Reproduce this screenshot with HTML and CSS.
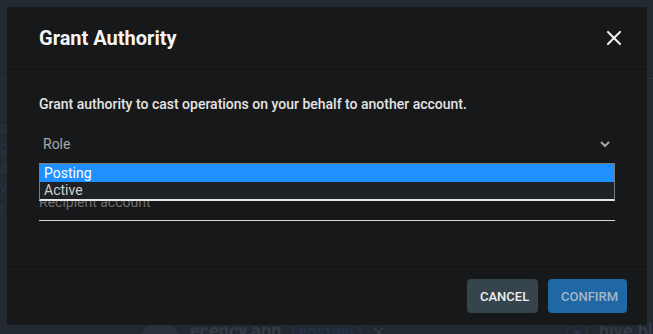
FILE: index.html
```html
<!DOCTYPE html>
<html lang="en">
<head>
<meta charset="utf-8">
<title>Grant Authority</title>
<link rel="stylesheet" href="styles.css">
</head>
<body>
<div class="page">
  <div class="page-top"></div>
  <div class="page-side">
    <span class="ghost-l">c</span>
    <span class="ghost-l">g</span>
    <span class="ghost-l">a</span>
    <span class="ghost-l">w</span>
    <span class="ghost-l">r</span>
  </div>
  <div class="page-row">
    <span class="ghost-avatar"></span>
    <span class="ghost-name">ecency.app</span>
    <span class="ghost-tag">( POSTING )</span>
    <span class="ghost-x">✕</span>
    <span class="ghost-spacer"></span>
    <span class="ghost-tag">( ♥ )</span>
    <span class="ghost-name last">hive.blog</span>
  </div>
</div>

<div class="modal">
  <div class="modal-header">
    <h2 class="modal-title">Grant Authority</h2>
    <button class="close-btn" aria-label="Close">
      <svg width="14" height="14" viewBox="0 0 14 14"><path d="M1 1 L13 13 M13 1 L1 13" stroke="#f2f2f2" stroke-width="2" stroke-linecap="square"/></svg>
    </button>
  </div>
  <div class="modal-body">
    <p class="intro">Grant authority to cast operations on your behalf to another account.</p>
    <div class="select-wrap">
      <div class="select">
        <span class="select-label">Role</span>
        <svg class="chevron" width="10" height="6" viewBox="0 0 10 6"><path d="M1 1 L5 5 L9 1" fill="none" stroke="#a8a8a8" stroke-width="2"/></svg>
      </div>
      <div class="dropdown">
        <div class="option selected">Posting</div>
        <div class="option">Active</div>
      </div>
    </div>
    <div class="input">Recipient account</div>
  </div>
  <div class="modal-footer">
    <button class="btn btn-cancel">Cancel</button>
    <button class="btn btn-confirm">Confirm</button>
  </div>
</div>
</body>
</html>
```

FILE: styles.css
```css
* { box-sizing: border-box; }
html, body {
  margin: 0;
  padding: 0;
}
body {
  width: 653px;
  height: 334px;
  overflow: hidden;
  position: relative;
  background: #222931;
  font-family: Roboto, "Liberation Sans", sans-serif;
  color: #e6e6e6;
}
.page {
  height: 334px;
  display: flex;
  flex-direction: column;
  overflow: hidden;
}
.page-top {
  height: 79px;
  flex: none;
  border-bottom: 1px solid #2b333c;
}
.page-side {
  display: flex;
  flex-direction: column;
  padding: 42px 0 0 0;
  gap: 6px;
  color: #2c343e;
  font-size: 16px;
  line-height: 14px;
}
.ghost-l { display: block; }
.page-row {
  margin-top: auto;
  height: 12px;
  flex: none;
  display: flex;
  align-items: flex-start;
  gap: 10px;
  padding: 0 0 0 140px;
  color: #323c47;
  font-size: 18px;
  font-weight: 700;
  line-height: 22px;
  overflow: hidden;
}
.ghost-avatar {
  width: 40px;
  height: 40px;
  border-radius: 50%;
  background: #29323d;
}
.ghost-name { margin-top: -2px; }
.ghost-name.last { margin-right: -20px; }
.ghost-tag { color: #24324a; font-size: 13px; font-weight: 700; }
.ghost-x { font-size: 16px; font-weight: 400; }
.ghost-spacer { flex: 1; }

.modal {
  position: absolute;
  top: 7px;
  left: 7px;
  width: 640px;
  height: 318px;
  background: #17181a;
  display: flex;
  flex-direction: column;
  border-radius: 2px;
}
.modal-header {
  display: flex;
  align-items: center;
  justify-content: space-between;
  padding: 16px 26px 16px 32px;
  border-bottom: 1px solid #0f1011;
  height: 63px;
  flex: none;
}
.modal-title {
  margin: 0;
  font-size: 20px;
  font-weight: 700;
  line-height: 30px;
  color: #f4f4f4;
}
.close-btn {
  background: none;
  border: 0;
  padding: 0;
  width: 14px;
  height: 14px;
  display: flex;
}
.modal-body {
  flex: 1;
  padding: 24px 32px 0 32px;
}
.intro {
  margin: 0 0 12px 0;
  font-size: 14px;
  font-weight: 500;
  line-height: 20px;
  color: #e4e4e4;
}
.select-wrap {
  position: relative;
}
.select {
  height: 36px;
  display: flex;
  align-items: center;
  justify-content: space-between;
  padding: 0 5px 0 4px;
}
.select-label {
  font-size: 14px;
  color: #a9a9a9;
}
.chevron { display: block; }
.dropdown {
  position: absolute;
  top: 37px;
  left: 0;
  right: 0;
  border: 1px solid #7a7a7a;
  border-bottom: 2px solid #e6e6e6;
  background: #1e2125;
  z-index: 2;
}
.option {
  height: 17px;
  line-height: 17px;
  padding-left: 4px;
  font-size: 14px;
  color: #cfcfcf;
}
.option.selected {
  background: #1e90ff;
  color: #ffffff;
  height: 18px;
  line-height: 18px;
}
.input {
  margin-top: 24px;
  height: 35px;
  border-bottom: 1px solid #d6d6d6;
  font-size: 14px;
  color: #6f6f6f;
  padding-top: 8px;
}
.modal-footer {
  flex: none;
  border-top: 1px solid #0f1011;
  padding: 12px 20px 12px 0;
  display: flex;
  justify-content: flex-end;
  gap: 10px;
}
.btn {
  height: 34px;
  border: 0;
  border-radius: 4px;
  font-family: Roboto, "Liberation Sans", sans-serif;
  font-size: 13px;
  font-weight: 500;
  text-transform: uppercase;
  padding: 0 13px;
}
.btn-cancel {
  width: 71px;
  background: #36444b;
  color: #eef0f2;
}
.btn-confirm {
  width: 79px;
  background: #1f68a5;
  color: #a6b6c6;
}
```
